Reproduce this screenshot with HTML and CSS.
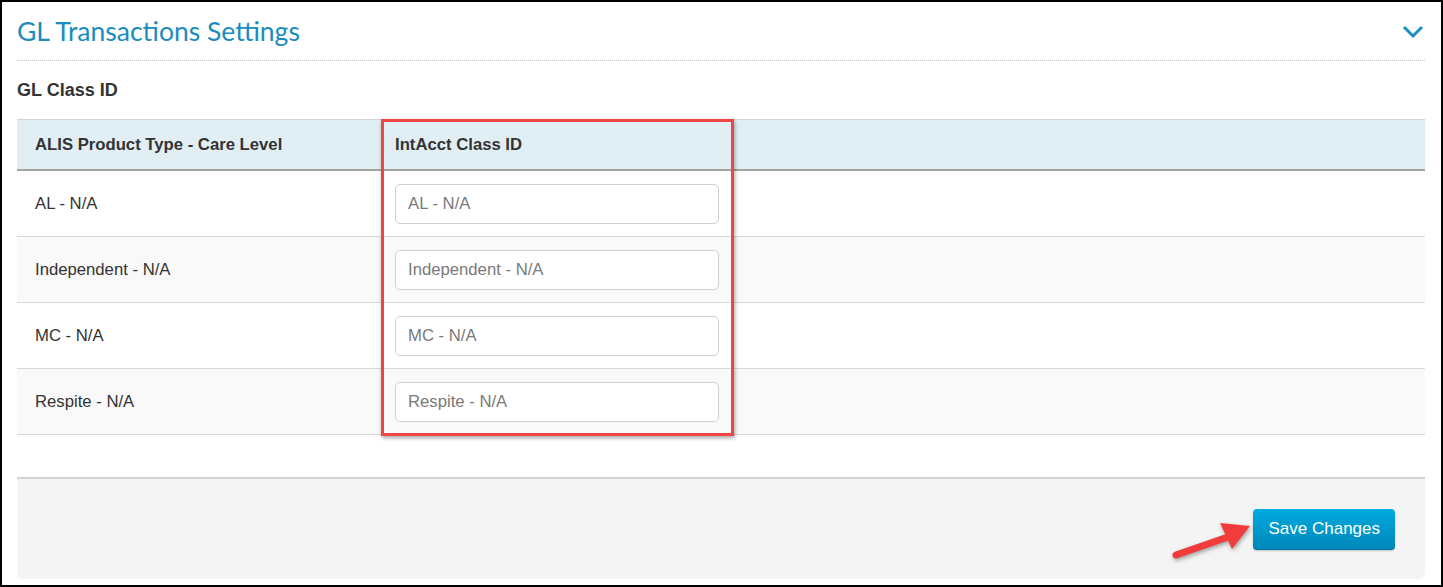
FILE: index.html
```html
<!DOCTYPE html>
<html lang="en">
<head>
  <meta charset="UTF-8" />
  <title>GL Transactions Settings</title>
  <link rel="stylesheet" href="styles.css">
</head>
<body>
  <div class="frame">
    <div class="panel-head">
      <h1>GL Transactions Settings</h1>
      <svg class="chevron" width="22" height="14" viewBox="0 0 22 14">
        <path d="M2 2 L11 11 L20 2" fill="none" stroke="#1a8fc0" stroke-width="3"/>
      </svg>
    </div>

    <h2>GL Class ID</h2>

    <div class="table-wrap">
      <table>
        <thead>
          <tr><th class="col1">ALIS Product Type - Care Level</th><th class="col2">IntAcct Class ID</th><th></th></tr>
        </thead>
        <tbody>
          <tr><td>AL - N/A</td><td><input type="text" placeholder="AL - N/A"></td><td></td></tr>
          <tr><td>Independent - N/A</td><td><input type="text" placeholder="Independent - N/A"></td><td></td></tr>
          <tr><td>MC - N/A</td><td><input type="text" placeholder="MC - N/A"></td><td></td></tr>
          <tr><td>Respite - N/A</td><td><input type="text" placeholder="Respite - N/A"></td><td></td></tr>
        </tbody>
      </table>
      <div class="highlight"></div>
    </div>

    <div class="footer">
      <svg class="arrow" width="90" height="44" viewBox="0 0 90 44">
        <path d="M6 36 L58 18" stroke="#f23b3b" stroke-width="7" stroke-linecap="round" fill="none"/>
        <path d="M50 4 L80 7 L62 30 Z" fill="#f23b3b"/>
      </svg>
      <button class="btn-save">Save Changes</button>
    </div>
  </div>
</body>
</html>
```

FILE: styles.css
```css
body {
  margin: 0;
  font-family: "Liberation Sans", Arial, sans-serif;
  color: #333;
  background: white;
}

.frame {
  width: 1443px;
  height: 587px;
  box-sizing: border-box;
  border: 2px solid #000;
  padding: 0 16px 0 15px;
}

.panel-head {
  display: flex;
  justify-content: space-between;
  align-items: center;
  height: 58px;
  border-bottom: 1px dotted #c8c8c8;
}

h1 {
  margin: 0;
  font-family: Lato, "Liberation Sans", sans-serif;
  font-weight: normal;
  font-size: 26.5px;
  color: #1a8cbd;
}

.chevron {
  margin-right: 1px;
  margin-top: 2px;
}

h2 {
  margin: 18px 0 18px;
  font-size: 18px;
  font-weight: bold;
  color: #333;
  line-height: 22px;
}

.table-wrap {
  position: relative;
}

table {
  width: 100%;
  border-collapse: collapse;
  font-size: 16.7px;
}

thead tr {
  background: #e1eff5;
  border-top: 1px solid #d4d4d4;
  border-bottom: 2px solid #a4a4a4;
}

th {
  text-align: left;
  height: 49px;
  padding: 0 18px;
  font-weight: bold;
  color: #333;
}

.col1, .col2 {
  width: 324px;
}

td {
  height: 65px;
  padding: 0 18px;
  border-bottom: 1px solid #d8d8d8;
  color: #333;
}

tbody tr:nth-child(even) {
  background: #f9f9f9;
}

input[type='text'] {
  width: 100%;
  height: 40px;
  box-sizing: border-box;
  padding: 0 12px;
  font-family: "Liberation Sans", Arial, sans-serif;
  font-size: 16.7px;
  border: 1px solid #d0d0d0;
  border-radius: 5px;
  background: white;
}

input::placeholder {
  color: #7a7a7a;
}

.highlight {
  position: absolute;
  left: 364px;
  top: 0;
  width: 347px;
  height: 311px;
  border: 3px solid #f04545;
  box-shadow: 1px 2px 4px rgba(0, 0, 0, 0.35);
}

.footer {
  position: relative;
  margin-top: 42px;
  height: 100px;
  background: #f4f4f4;
  border-top: 2px solid #d4d4d4;
  border-radius: 0 0 6px 6px;
  display: flex;
  justify-content: flex-end;
  align-items: center;
  padding-right: 30px;
}

.btn-save {
  height: 41px;
  padding: 0 15px;
  border: none;
  border-radius: 4px;
  background: linear-gradient(#00abdf, #0087b9);
  border-bottom: 1px solid #00739e;
  color: white;
  font-family: "Liberation Sans", Arial, sans-serif;
  font-size: 17px;
  box-shadow: 0 1px 2px rgba(0, 0, 0, 0.2);
}

.arrow {
  position: absolute;
  left: 1153px;
  top: 40px;
  filter: drop-shadow(1px 2px 2px rgba(0, 0, 0, 0.35));
}
```
